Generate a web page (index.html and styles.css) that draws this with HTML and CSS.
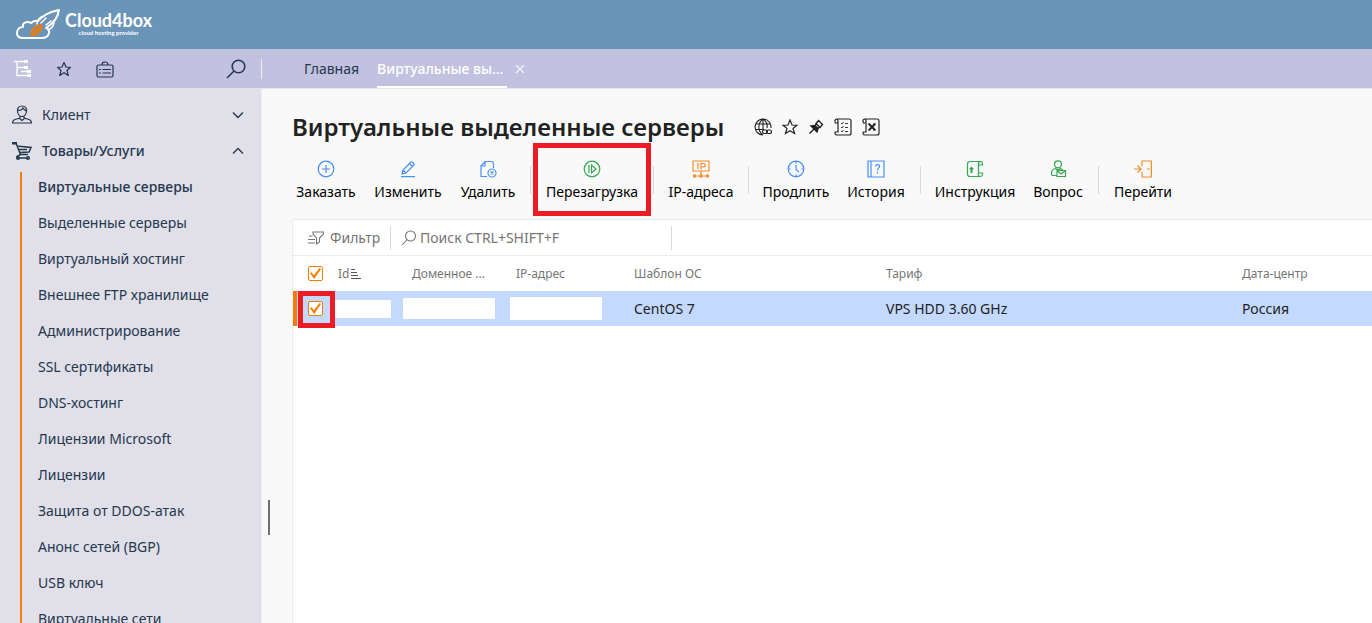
FILE: index.html
```html
<!DOCTYPE html>
<html lang="ru">
<head>
<meta charset="utf-8">
<title>Виртуальные выделенные серверы</title>
<link rel="stylesheet" href="styles.css">
</head>
<body>
<header class="brand">
  <svg class="brand-mark" width="46" height="32" viewBox="0 0 46 32" fill="none" stroke="#fff" stroke-width="2" stroke-linejoin="round" stroke-linecap="round">
    <path d="M27 30H8C4 30 2 28 2 25C2 21 5 19 8 19C7 14 13 13 16 15C18 13 20 12 23 13M32 20C36 23 34 30 27 30"/>
    <path d="M23 13C27 8 34 4 44 2C43 9 39 15 31 20"/>
    <path d="M29 8C24 9 22 13 22 16M39 13C39 18 36 21 33 22M26 15L31 10M31 17L36 13" stroke-width="1.600"/>
    <path d="M17 27C16 22 19 18 26 17C27 22 23 26 17 27ZM20 24L23 21" stroke="#f57c00" stroke-width="2.200"/>
  </svg>
  <div class="brand-text">
    <span class="brand-name">Cloud4box</span>
    <span class="brand-sub">cloud hosting provider</span>
  </div>
</header>

<div class="topbar">
  <div class="topbar-tools">
    <button class="tool" aria-label="Дерево">
      <svg width="18" height="18" viewBox="0 0 18 18" fill="none" stroke="#fff" stroke-width="1.300"><path d="M0 1.500H10M3 2V15.500H13M3 7.500H10M7 11.500H13"/><path fill="#fff" stroke="none" d="M10 0h4v3h-4zM10 6h4v3h-4zM13 10h4v3h-4zM13 14h4v3h-4z"/></svg>
    </button>
    <button class="tool" aria-label="Избранное">
      <svg width="16" height="16" viewBox="0 0 16 16" fill="none" stroke="#24384f" stroke-width="1.200" stroke-linejoin="round"><path d="M8 1.500L10 6L14.500 6.300L11 9.500L12.300 14.500L8 11.700L3.700 14.500L5 9.500L1.500 6.300L6 6Z"/></svg>
    </button>
    <button class="tool" aria-label="Список">
      <svg width="18" height="18" viewBox="0 0 18 18" fill="none" stroke="#24384f" stroke-width="1.200"><rect x="1" y="5" width="16" height="12" rx="1.500"/><path d="M6 5C6 2.500 7 2 9 2S12 2.500 12 5M3 9.500H5M6.500 9.500H15M3 13H5M6.500 13H15"/></svg>
    </button>
    <button class="tool tool-search" aria-label="Поиск">
      <svg width="20" height="20" viewBox="0 0 20 20" fill="none" stroke="#24384f" stroke-width="1.600"><circle cx="12.500" cy="7.500" r="6.300"/><path d="M8 12L1 19"/></svg>
    </button>
  </div>
  <nav class="tabs">
    <a class="tab" href="#">Главная</a>
    <a class="tab tab-active" href="#">Виртуальные вы…</a>
    <button class="tab-close" aria-label="Закрыть"><svg width="10" height="10" viewBox="0 0 10 10" stroke="#f1f0fa" stroke-width="1.400"><path d="M1 1L9 9M9 1L1 9"/></svg></button>
  </nav>
</div>

<div class="page">
  <aside class="sidebar">
    <button class="group">
      <svg width="20" height="20" viewBox="0 0 20 20" fill="none" stroke="#24384f" stroke-width="1.200"><path d="M5.500 6C5 3 7 1 10 1S15 3 14.500 6C14.300 9 12.500 11.500 10 11.500S5.700 9 5.500 6ZM6 5C8 6 10 5 11 3C12 5 13 5 14.500 6M8 11V13L3 14.500C1 15 .6 16 .6 18H19.400C19.400 16 19 15 17 14.500L12 13V11M7 13L10 15.500L13 13"/></svg>
      <span class="group-name">Клиент</span>
      <svg width="12" height="8" viewBox="0 0 12 8" fill="none" stroke="#24384f" stroke-width="1.400"><path d="M1 1.500L6 6.500L11 1.500"/></svg>
    </button>
    <button class="group group-open">
      <svg width="20" height="20" viewBox="0 0 20 20" fill="none" stroke="#24384f" stroke-width="1.500"><path d="M0 2.200H4L8.500 13.500H16M4.500 5L19 6.500L17 11L7.500 11.500M7 8.500H15M8.500 13.500L5 15.500L6 17H16"/><path d="M0 1h5v2.500H0z" fill="#24384f" stroke="none"/><circle cx="6" cy="17" r="1.300"/><circle cx="16" cy="17" r="1.300"/></svg>
      <span class="group-name">Товары/Услуги</span>
      <svg width="12" height="8" viewBox="0 0 12 8" fill="none" stroke="#24384f" stroke-width="1.400"><path d="M1 6.500L6 1.500L11 6.500"/></svg>
    </button>
    <nav class="submenu">
      <a class="current" href="#">Виртуальные серверы</a>
      <a href="#">Выделенные серверы</a>
      <a href="#">Виртуальный хостинг</a>
      <a href="#">Внешнее FTP хранилище</a>
      <a href="#">Администрирование</a>
      <a href="#">SSL сертификаты</a>
      <a href="#">DNS-хостинг</a>
      <a href="#">Лицензии Microsoft</a>
      <a href="#">Лицензии</a>
      <a href="#">Защита от DDOS-атак</a>
      <a href="#">Анонс сетей (BGP)</a>
      <a href="#">USB ключ</a>
      <a href="#">Виртуальные сети</a>
    </nav>
  </aside>
  <div class="splitter"><span class="grip"></span></div>

  <main class="content">
    <div class="title-row">
      <h1>Виртуальные выделенные серверы</h1>
      <div class="title-tools">
        <button aria-label="Ссылка"><svg width="18" height="18" viewBox="0 0 18 18" fill="none" stroke="#222" stroke-width="1.100"><path d="M9 17A8 8 0 1 1 17 10M9 1C3.500 5 3.500 13 9 17M9 1C12.500 3 13.500 7 13 10M9 1V11M1.500 6H16.500M1.500 11.500H10"/><rect x="8.500" y="12" width="5" height="3.500" rx="1.700"/><rect x="12.500" y="12" width="5" height="3.500" rx="1.700"/></svg></button>
        <button aria-label="В избранное"><svg width="16" height="16" viewBox="0 0 16 16" fill="none" stroke="#222" stroke-width="1.200"><path d="M8 1L10 6L15 6.300L11 9.500L12.500 14.500L8 11.700L3.500 14.500L5 9.500L1 6.300L6 6Z"/></svg></button>
        <button aria-label="Закрепить"><svg width="16" height="16" viewBox="0 0 16 16" fill="none" stroke="#222" stroke-width="1.400"><path d="M10.500 1.500L14.500 5.500L12 8.500L8 4.500ZM8.500 5L6.500 7M11.500 8L9.500 10M6 10L1.500 14.500"/><path d="M3 7L7 6.500L10 9.500L9 13Z" fill="#222"/></svg></button>
        <button aria-label="Список"><svg width="18" height="18" viewBox="0 0 18 18" fill="none" stroke="#222" stroke-width="1.200"><path d="M4 5H1.500C.5 3 .8 1 3 1H15C16.500 1 17 2 17 3V15C17 16.500 16 17 15 17H3C1 17 .5 15 1.500 14H4V3C4 2 3.500 1 2.500 1"/><path d="M7 5L8 6L9.500 4M7 9L8 10L9.500 8M7 13L8 14L9.500 12M11 5.500H14M11 9.500H14M11 13.500H14" stroke-width=".9"/></svg></button>
        <button aria-label="Экспорт в Excel"><svg width="18" height="18" viewBox="0 0 18 18" fill="none" stroke="#222" stroke-width="1.200"><path d="M4 5H1.500C.5 3 .8 1 3 1H15C16.500 1 17 2 17 3V15C17 16.500 16 17 15 17H3C1 17 .5 15 1.500 14H4V3C4 2 3.500 1 2.500 1"/><path d="M7 6L13 12M13 6L7 12" stroke-width="2"/><path d="M11 6H14M11 12H14M6 6H8M6 12H8"/></svg></button>
      </div>
    </div>

    <div class="toolbar">
      <button class="action blue"><svg width="18" height="18" viewBox="0 0 18 18"><circle cx="9" cy="9" r="7.800"/><path d="M9 5V13M5 9H13"/></svg>Заказать</button>
      <button class="action blue"><svg width="18" height="18" viewBox="0 0 18 18"><path d="M3 14L4 10L12 2C13 1 16 4 15 5L7 13ZM10.500 3.500L13.500 6.500M4 10L7 13M2 16.700H16"/></svg>Изменить</button>
      <button class="action blue"><svg width="18" height="18" viewBox="0 0 18 18"><path d="M8 16.500H2V6L6 1.500H12C14 1.500 14.500 2 14.500 4V8M2 6H6V1.500"/><circle cx="13" cy="13" r="4"/><path d="M11.500 11.500L14.500 14.500M14.500 11.500L11.500 14.500"/></svg>Удалить</button>
      <span class="sep"></span>
      <button class="action green marked"><svg width="18" height="18" viewBox="0 0 18 18"><circle cx="9" cy="9" r="7.800"/><path d="M6 5V13M8.500 5V13L13 9Z"/></svg>Перезагрузка</button>
      <span class="sep"></span>
      <button class="action orange"><svg width="18" height="18" viewBox="0 0 18 18"><path d="M1 1H17V11H1ZM6 3V9M9 9.500V3.500H11.500C14 3.500 14 7 11.500 7H9M9 11V16M2 16H16"/><path class="solid" d="M1 14.500h3v3H1zM7.500 14.500h3v3h-3zM14 14.500h3v3h-3z"/></svg>IP-адреса</button>
      <span class="sep"></span>
      <button class="action blue"><svg width="18" height="18" viewBox="0 0 18 18"><circle cx="9" cy="9" r="7.800"/><path d="M9 1V3.500M9 14.500V17M1 9H3.500M14.500 9H17M9 5V9.500L12 12"/></svg>Продлить</button>
      <button class="action blue"><svg width="18" height="18" viewBox="0 0 18 18"><path d="M1 1H17V17H1ZM4 1V17M8.500 6.500C8.500 4 12.500 4 12.500 6.500C12.500 8 10.500 8 10.500 10.500M10.500 12V13.500"/></svg>История</button>
      <span class="sep"></span>
      <button class="action green"><svg width="18" height="18" viewBox="0 0 18 18"><path d="M15 1.500H4C2 1.500 1.500 2.500 1.500 4V14C1.500 16 2.500 16.500 4 16.500H14C12 16 12 14 12.500 13V4C12.500 2.500 13.500 1.500 15 1.500C16 1.500 16.500 2.500 16.500 5H12.500M12.500 13H16.500C17 15 16 16.500 14 16.500"/><path d="M4 9.500L5.500 8L7 9.500M5.500 13V9" stroke-width="2"/></svg>Инструкция</button>
      <button class="action green"><svg width="18" height="18" viewBox="0 0 18 18"><circle cx="9" cy="4.300" r="3.500"/><path d="M7.500 15.500H4C2.500 15.500 2.500 14.500 2.500 13C2.500 11 4 9 6.500 8.500C8 10 10 10 11.500 8.500L14 10M8 10.500H16.500V16.500H8ZM8.500 11L12 14L16 11"/></svg>Вопрос</button>
      <span class="sep"></span>
      <button class="action orange"><svg width="18" height="18" viewBox="0 0 18 18"><path d="M8 6V1H17.400V17H8V12M0 9H7M3.500 5.500L7 9L3.500 12.500M13 9H16"/></svg>Перейти</button>
    </div>

    <section class="panel">
      <div class="filters">
        <button class="filter"><svg width="16" height="14" viewBox="0 0 16 14" fill="none" stroke="#777" stroke-width="1.100"><path d="M5 1H15.500V3L11.500 7V11L8.500 13V7L5 3ZM1 5H4.500M0 8.500H7M0 12H7"/></svg>Фильтр</button>
        <label class="search"><svg width="16" height="16" viewBox="0 0 16 16" fill="none" stroke="#777" stroke-width="1.100"><circle cx="9.500" cy="6" r="5"/><path d="M6 9.500L1 15"/></svg><input type="text" aria-label="Поиск" placeholder="Поиск CTRL+SHIFT+F"></label>
      </div>
      <table>
        <colgroup><col class="c-check"><col class="c-id"><col class="c-domain"><col class="c-ip"><col class="c-os"><col class="c-plan"><col></colgroup>
        <thead>
          <tr>
            <th class="cell-check"><input type="checkbox" aria-label="Выбрать все" checked></th>
            <th><span class="sorted">Id<svg width="10" height="10" viewBox="0 0 10 10" stroke="#555" stroke-width="1"><path d="M0 .5H4M0 3.500H6M0 6.500H7M0 9.500H10"/></svg></span></th>
            <th>Доменное ...</th><th>IP-адрес</th><th>Шаблон ОС</th><th>Тариф</th><th>Дата-центр</th>
          </tr>
        </thead>
        <tbody>
          <tr>
            <td class="cell-check"><span class="check-mark"><input type="checkbox" aria-label="Выбрать сервер" checked></span></td>
            <td class="cell-hidden"><span class="blank blank-id"></span></td>
            <td class="cell-hidden"><span class="blank blank-domain"></span></td>
            <td class="cell-hidden"><span class="blank blank-ip"></span></td>
            <td>CentOS 7</td><td>VPS HDD 3.60 GHz</td><td>Россия</td>
          </tr>
        </tbody>
      </table>
    </section>
  </main>
</div>
</body>
</html>
```

FILE: styles.css
```css
* { box-sizing: border-box; }
body {
  margin: 0;
  height: 100vh;
  overflow: hidden;
  display: flex;
  flex-direction: column;
  background: #f9f9f9;
  color: #222;
  font: 14px/20px "Noto Sans", "Open Sans", sans-serif;
}
button { border: 0; padding: 0; background: none; color: inherit; font: inherit; cursor: pointer; }
a { color: inherit; text-decoration: none; }
svg { display: block; flex: none; }

.brand {
  flex: none;
  display: flex;
  align-items: flex-start;
  gap: 4px;
  height: 49px;
  padding: 8px 15px;
  background: #6a94b8;
  color: #fff;
}
.brand-text { display: flex; flex-direction: column; align-items: center; padding-top: 3px; font-family: Lato, sans-serif; font-weight: 700; }
.brand-name { font-size: 18px; line-height: 19px; }
.brand-sub { font-size: 6px; line-height: 6px; }

.topbar { flex: none; display: flex; height: 40px; background: #c3c1e0; border-bottom: 1px solid #e4e4e8; color: #24384f; }
.topbar-tools { flex: none; display: flex; align-items: center; gap: 24px; width: 262px; height: 20px; margin-top: 10px; padding: 0 15px 0 14px; border-right: 1px solid #eeedf6; }
.tool-search { margin-left: auto; }
.tabs { display: flex; gap: 18px; padding-left: 42px; }
.tab { height: 39px; line-height: 39px; border-bottom: 2px solid transparent; }
.tab-active { width: 130px; white-space: nowrap; border-color: #fff; color: #fff; font-weight: 500; }
.tab-close { display: flex; align-items: center; margin-left: -10px; }

.page { flex: 1; display: flex; min-height: 0; }
.sidebar { flex: none; width: 262px; padding-top: 8px; overflow: hidden; background: #e1dfe8; border-right: 1px solid #ecebf0; color: #24384f; }
.group { display: flex; align-items: center; gap: 10px; width: 100%; height: 36px; padding: 0 17px 0 12px; text-align: left; }
.group-name { flex: 1; }
.group-open, .current { font-weight: 500; }
.submenu { display: flex; flex-direction: column; margin-left: 20px; border-left: 2px solid #f57c00; padding-left: 16px; margin-top: 3px; }
.submenu a { line-height: 36px; }
.submenu a:first-child { margin-top: -3px; }
.splitter { flex: none; display: flex; align-items: flex-start; width: 30px; padding: 411px 0 0 6px; }
.grip { width: 2px; height: 35px; background: #6d6d6d; }

.content { flex: 1; min-width: 0; display: flex; flex-direction: column; }
.title-row { display: flex; align-items: center; gap: 30px; height: 59px; padding-top: 16px; }
h1 { margin: 0; font-size: 24px; line-height: 32px; font-weight: 600; white-space: nowrap; }
.title-tools { display: flex; align-items: center; gap: 10px; }

.toolbar {
  display: grid;
  grid-template-columns: 78px 86px 74px 11px 112px 11px 84px 11px 84px 76px 12px 98px 68px 12px 78px;
  align-items: start;
  height: 71px;
  margin-left: -5px;
  padding-top: 12px;
}
.action { display: flex; flex-direction: column; align-items: center; gap: 4px; color: #000; white-space: nowrap; }
.action svg { fill: none; stroke: currentColor; stroke-width: 1.2; overflow: visible; }
.action .solid { fill: currentColor; stroke: none; }
.action.blue svg { color: #4690fa; }
.action.green svg { color: #34a853; }
.action.orange svg { color: #f28c28; }
.sep { justify-self: center; width: 1px; height: 28px; margin-top: 6px; background: #d9d9d9; }
.marked { position: relative; }
.marked::after { content: ""; position: absolute; inset: -17px -3px -14px; border: 5px solid #ed1c24; }

.panel { flex: 1; background: #fff; border: 1px solid #ebebeb; border-width: 1px 0 0 1px; border-radius: 2px 0 0 0; }
.filters { display: flex; align-items: center; height: 36px; padding-left: 15px; border-bottom: 1px solid #ebebeb; color: #757575; }
.filter { display: flex; align-items: center; gap: 6px; width: 83px; height: 24px; border-right: 1px solid #d9d9d9; }
.search { display: flex; align-items: center; gap: 3px; width: 281px; height: 24px; padding-left: 10px; border-right: 1px solid #d9d9d9; }
.search input { flex: 1; min-width: 0; border: 0; padding: 0; outline: 0; background: none; font: inherit; color: inherit; }
.search input::placeholder { color: #757575; opacity: 1; }

table { width: 100%; table-layout: fixed; border-collapse: separate; border-spacing: 0; }
.c-check { width: 35px; }
.c-id { width: 74px; }
.c-domain { width: 104px; }
.c-ip { width: 118px; }
.c-os { width: 252px; }
.c-plan { width: 356px; }
th, td { height: 35px; padding: 0 10px; text-align: left; white-space: nowrap; }
th { color: #757575; font-size: 12px; font-weight: 400; }
td { background: #c4d9ff; }
.sorted { display: flex; align-items: center; gap: 3px; }
.sorted svg { margin-left: -1px; }
th.cell-check, td.cell-check { padding: 0 0 0 15px; }
td.cell-check { border-left: 4px solid #f57c00; padding-left: 11px; }
td.cell-hidden { padding: 0; }
.blank { display: block; background: #fff; }
.blank-id { height: 18px; margin: 0 11px 0 7px; }
.blank-domain { height: 21px; margin: 0 11px 0 1px; }
.blank-ip { width: 92px; height: 23px; margin-left: 4px; }
.check-mark { display: block; position: relative; }
.check-mark::after { content: ""; position: absolute; inset: -10px -7px -12px -10px; border: 5px solid #ed1c24; pointer-events: none; }
input[type="checkbox"] {
  appearance: none;
  display: flex;
  align-items: center;
  justify-content: center;
  width: 15px;
  height: 15px;
  margin: 0;
  border: 1px solid #f57c00;
  border-radius: 2px;
  background: #fff;
}
input[type="checkbox"]::after {
  content: "";
  width: 11px;
  height: 11px;
  background: #f57c00;
  clip-path: polygon(0 48%, 14% 38%, 36% 66%, 86% 0, 100% 8%, 38% 100%);
}
```
